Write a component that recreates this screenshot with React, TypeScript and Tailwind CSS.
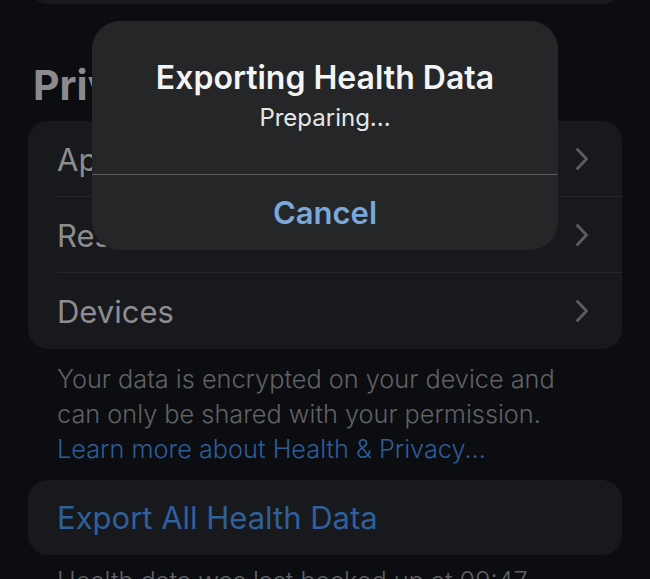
import React from "react";

const Chevron = () => (
  <svg width="14" height="24" viewBox="0 0 14 24" fill="none">
    <path d="M2.5 2.5 L11.5 12 L2.5 21.5" stroke="#5b5c5f" strokeWidth="3" strokeLinecap="round" strokeLinejoin="round" />
  </svg>
);

const Row = ({ label, last }: { label: string; last?: boolean }) => (
  <div className="relative flex h-[76px] items-center justify-between pl-[29px] pr-[33px]">
    <span className="text-[31px] leading-[31px] text-[#8d8d90]">{label}</span>
    <Chevron />
    {!last && <div className="absolute bottom-0 left-[29px] right-0 h-px bg-[#25262a]" />}
  </div>
);

export default function App() {
  return (
    <div
      className="relative h-[579px] w-[650px] overflow-hidden bg-[#0b0d11]"
      style={{ fontFamily: "Inter, 'Noto Sans', sans-serif" }}
    >
      <div className="mx-[28px] h-[4px] overflow-hidden">
        <div className="-mt-[40px] h-[44px] rounded-[20px] bg-[#18191c]" />
      </div>

      <div className="ml-[33px] mt-[61px] text-[41px] font-bold leading-[41px] text-[#8b8b8e]">Privacy</div>

      <div className="mx-[28px] mt-[15px] overflow-hidden rounded-[20px] bg-[#18191c]">
        <Row label="Apps" />
        <Row label="Research Studies" />
        <Row label="Devices" last />
      </div>

      <div className="ml-[57px] mr-[20px] mt-[12px] text-[25.3px] font-light leading-[35px] text-[#606165]">
        <div>Your data is encrypted on your device and</div>
        <div>can only be shared with your permission.</div>
        <div className="text-[#2d5d98]">Learn more about Health &amp; Privacy...</div>
      </div>

      <div className="mx-[28px] mt-[14px] flex h-[75px] items-center rounded-[20px] bg-[#18191c] pl-[29px]">
        <span className="text-[31px] leading-[31px] text-[#2f609b]">Export All Health Data</span>
      </div>

      <div className="ml-[57px] mt-[8px] text-[25.3px] font-light leading-[35px] text-[#606165]">
        Health data was last backed up at 09:47
      </div>

      <div className="absolute left-[92px] top-[21px] flex h-[229px] w-[466px] flex-col rounded-[28px] bg-[#242628]">
        <div className="mt-[41px] text-center text-[32px] font-semibold leading-[32px] text-[#f4f4f4]">
          Exporting Health Data
        </div>
        <div className="mt-[12px] text-center text-[24px] leading-[24px] text-[#e6e6e6]">Preparing...</div>
        <div className="mt-[44px] h-px bg-[#5a5a5d]" />
        <div className="flex flex-1 items-center justify-center">
          <span className="text-[31px] font-semibold leading-[31px] text-[#7aa8de]">Cancel</span>
        </div>
      </div>
    </div>
  );
}
